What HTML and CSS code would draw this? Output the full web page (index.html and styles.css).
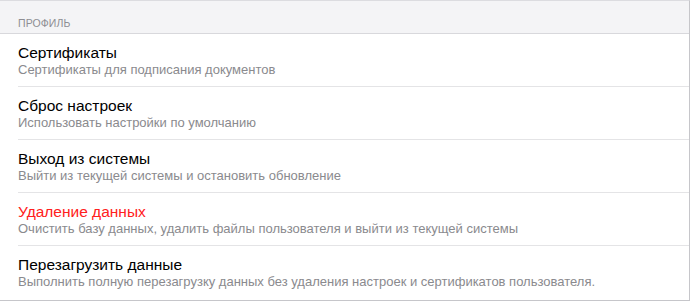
FILE: index.html
```html
<!DOCTYPE html>
<html lang="ru">
<head>
<meta charset="utf-8">
<link rel="stylesheet" href="styles.css">
</head>
<body>
<div class="panel">
  <div class="section-header">Профиль</div>
  <ul class="list">
    <li class="item">
      <div class="title">Сертификаты</div>
      <div class="subtitle">Сертификаты для подписания документов</div>
    </li>
    <li class="item">
      <div class="title">Сброс настроек</div>
      <div class="subtitle">Использовать настройки по умолчанию</div>
    </li>
    <li class="item">
      <div class="title">Выход из системы</div>
      <div class="subtitle">Выйти из текущей системы и остановить обновление</div>
    </li>
    <li class="item">
      <div class="title danger">Удаление данных</div>
      <div class="subtitle">Очистить базу данных, удалить файлы пользователя и выйти из текущей системы</div>
    </li>
    <li class="item">
      <div class="title">Перезагрузить данные</div>
      <div class="subtitle">Выполнить полную перезагрузку данных без удаления настроек и сертификатов пользователя.</div>
    </li>
  </ul>
</div>
</body>
</html>
```

FILE: styles.css
```css
html, body {
  margin: 0;
  padding: 0;
  background: #ffffff;
}
body {
  font-family: "Liberation Sans", Arial, sans-serif;
  -webkit-font-smoothing: antialiased;
}
.panel {
  width: 689px;
  height: 299px;
  border-top: 1px solid #dcdce0;
  border-right: 1px solid #c6c6ca;
  border-bottom: 1px solid #c6c6ca;
  background: #ffffff;
  box-sizing: content-box;
  overflow: hidden;
}
.section-header {
  background: #f4f4f6;
  border-bottom: 1px solid #d8d8dc;
  padding: 16px 18px 4px;
  height: 12px;
  font-size: 10.5px;
  line-height: 12px;
  letter-spacing: 0.1px;
  text-transform: uppercase;
  color: #8e8e93;
}
.list {
  list-style: none;
  margin: 0;
  padding: 0 0 0 18px;
}
.item {
  height: 53px;
  padding-top: 9px;
  box-sizing: border-box;
  border-bottom: 1px solid #e4e4e6;
}
.item:last-child {
  border-bottom: none;
  height: 52px;
}
.title {
  font-size: 15.5px;
  line-height: 20px;
  color: #000000;
}
.title.danger {
  color: #ff2020;
}
.subtitle {
  font-size: 13px;
  line-height: 14px;
  color: #8a8a8e;
}
```
